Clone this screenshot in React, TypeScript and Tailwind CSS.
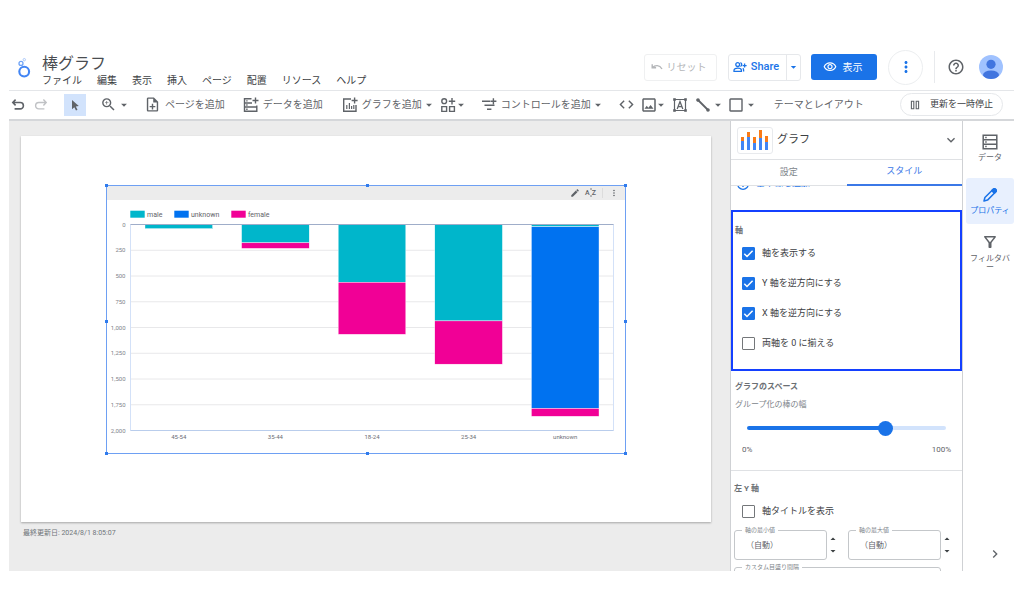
import { useState } from "react";
import type { ReactNode } from "react";
import {
  MdArrowDropDown,
  MdArrowDropUp,
  MdChevronRight,
  MdCode,
  MdEdit,
  MdHelpOutline,
  MdKeyboardArrowDown,
  MdMoreVert,
  MdOutlineFilterAlt,
  MdOutlineImage,
  MdOutlineNoteAdd,
  MdOutlineVisibility,
  MdZoomIn,
} from "react-icons/md";

const menus = ["ファイル", "編集", "表示", "挿入", "ページ", "配置", "リソース", "ヘルプ"];

type Series = "male" | "unknown" | "female";

const seriesColor: Record<Series, string> = {
  male: "#00b6cb",
  unknown: "#0072f0",
  female: "#f10096",
};

const legend: { name: Series; x: number }[] = [
  { name: "male", x: 24 },
  { name: "unknown", x: 68 },
  { name: "female", x: 125 },
];

const groups: { label: string; parts: [Series, number][] }[] = [
  { label: "45-54", parts: [["male", 40]] },
  { label: "35-44", parts: [["male", 178], ["female", 54]] },
  { label: "18-24", parts: [["male", 561], ["female", 505]] },
  { label: "25-34", parts: [["male", 936], ["female", 420]] },
  { label: "unknown", parts: [["male", 22], ["unknown", 1764], ["female", 76]] },
];

const AXIS = { left: 24.5, right: 507.5, top: 39.5, bottom: 245.5, max: 2000 };
const ticks = [0, 250, 500, 750, 1000, 1250, 1500, 1750, 2000];

function BarChart() {
  const unit = (AXIS.bottom - AXIS.top) / AXIS.max;
  const slot = (AXIS.right - AXIS.left) / groups.length;
  const barWidth = slot * 0.7;
  return (
    <svg viewBox="0 0 520 269" className="block w-full font-[Roboto]" role="img" aria-label="棒グラフ">
      {legend.map((l) => (
        <g key={l.name}>
          <rect x={l.x + 0.3} y="25.7" width="14.4" height="7" fill={seriesColor[l.name]} />
          <text x={l.x + 17} y="31.7" fontSize="7" fill="#5f6368">
            {l.name}
          </text>
        </g>
      ))}
      {ticks.map((t) => {
        const y = AXIS.top + t * unit;
        return (
          <g key={t}>
            <line x1={AXIS.left} x2={AXIS.right} y1={y} y2={y} stroke="#e8e8ea" strokeWidth="1" />
            <text x="19.5" y={y + 2.2} fontSize="6" textAnchor="end" fill="#80838a">
              {t.toLocaleString("en-US")}
            </text>
          </g>
        );
      })}
      <line x1={AXIS.left} x2={AXIS.left} y1={AXIS.top} y2={AXIS.bottom} stroke="#d3e1f8" />
      <line x1={AXIS.right} x2={AXIS.right} y1={AXIS.top} y2={AXIS.bottom} stroke="#d3e1f8" />
      <line x1={AXIS.left} x2={AXIS.right} y1={AXIS.bottom} y2={AXIS.bottom} stroke="#b9cdec" />
      {groups.map((g, i) => {
        const x = AXIS.left + slot * i + (slot - barWidth) / 2;
        let sum = 0;
        return (
          <g key={g.label}>
            {g.parts.map(([name, value]) => {
              const y = AXIS.top + sum * unit;
              sum += value;
              return (
                <rect
                  key={name}
                  x={x}
                  y={y}
                  width={barWidth}
                  height={value * unit}
                  fill={seriesColor[name]}
                  stroke="#ffffff"
                  strokeWidth="0.4"
                />
              );
            })}
            <text x={x + barWidth / 2} y="254" fontSize="6" textAnchor="middle" fill="#6b6e75">
              {g.label}
            </text>
          </g>
        );
      })}
      <line x1={AXIS.left} x2={AXIS.right} y1={AXIS.top} y2={AXIS.top} stroke="#9fadc9" />
    </svg>
  );
}

function Logo() {
  return (
    <svg viewBox="0 0 16 22" className="mb-[3px] h-[22px] w-4 shrink-0" fill="none" aria-hidden="true">
      <circle cx="8.2" cy="14.6" r="4.9" stroke="#4285f4" strokeWidth="2.1" />
      <circle cx="5" cy="6.4" r="2" stroke="#6ea3f7" strokeWidth="1.3" />
      <circle cx="8.3" cy="2.7" r="1.2" stroke="#a9c8fa" strokeWidth="1" />
    </svg>
  );
}

function Svg({ children }: { children: ReactNode }) {
  return (
    <svg viewBox="0 0 16 16" className="size-4 shrink-0" fill="none" stroke="currentColor" strokeWidth="1.4" aria-hidden="true">
      {children}
    </svg>
  );
}

const UndoIcon = () => (
  <Svg>
    <path d="M5.600 2.600 2.800 5.500l2.800 2.900M3 5.500h7.200a3.200 3.200 0 0 1 0 6.400H4.600" strokeWidth="1.600" />
  </Svg>
);
const RedoIcon = () => (
  <Svg>
    <path d="M10.400 2.600l2.800 2.900-2.800 2.900M13 5.500H5.800a3.200 3.200 0 0 0 0 6.400h5.600" strokeWidth="1.400" />
  </Svg>
);
const AddDataIcon = () => (
  <Svg>
    <path d="M8.5 1.7H1.5v12.6h12.3V8.5M1.5 6h7.5M1.5 10h12.3M12.5 0.5v6M9.5 3.5h6" />
    <path d="M3.2 3.9h1.4M3.2 8h1.4M3.2 12.2h1.4" />
  </Svg>
);
const AddChartIcon = () => (
  <Svg>
    <path d="M9 2H1.7v12.3H14V8M12.6 0.5v6M9.6 3.5h6" />
    <path d="M4.8 8v4M7.4 6v6M9.6 9v3M11.8 8v4" strokeWidth="1.2" />
  </Svg>
);
const CommunityIcon = () => (
  <Svg>
    <circle cx="4.2" cy="4.2" r="2.4" />
    <path d="M12 1v6.4M8.8 4.2h6.4M1.8 9.6h4.8v4.8H1.8zM9.6 9.6h4.8v4.8H9.6z" />
  </Svg>
);
const ControlIcon = () => (
  <Svg>
    <path d="M1 4.2h8M3.5 8.2h10M6 12.2h4.4M12.4 1.2v6M9.4 4.2h6" />
  </Svg>
);
const TextFrameIcon = () => (
  <Svg>
    <path d="M2.5 2.5h11v11h-11z" strokeWidth="1.2" />
    <path d="M1.5 1.5h2v2h-2zM12.5 1.5h2v2h-2zM1.5 12.5h2v2h-2zM12.5 12.5h2v2h-2z" fill="currentColor" strokeWidth="0.6" />
    <path d="M5.2 12 8 4.6 10.8 12M6.2 9.6h3.6" strokeWidth="1.3" />
  </Svg>
);
const LineIcon = () => (
  <Svg>
    <path d="M3 3l10 10" strokeWidth="1.8" />
    <circle cx="3" cy="3" r="1.1" fill="currentColor" />
    <circle cx="13" cy="13" r="1.1" fill="currentColor" />
  </Svg>
);
const RectIcon = () => (
  <Svg>
    <rect x="2" y="2" width="12" height="12" rx="0.6" />
  </Svg>
);
const CursorIcon = () => (
  <svg viewBox="0 0 16 16" className="size-4" fill="#5f6368" aria-hidden="true">
    <path d="M5 3v9.2l2.3-2 1.7 3.4 1.5-.8-1.7-3.3 3-.4z" />
  </svg>
);
const PauseIcon = () => (
  <svg viewBox="0 0 10 10" className="size-[10px]" fill="none" stroke="#5f6368" strokeWidth="1.1" aria-hidden="true">
    <path d="M1.4 1.3h2.4v7.4H1.4zM6.2 1.3h2.4v7.4H6.2z" />
  </svg>
);
const ShareIcon = () => (
  <svg viewBox="0 0 14 12" className="h-3 w-[14px]" fill="none" stroke="currentColor" strokeWidth="1.3" aria-hidden="true">
    <circle cx="4.7" cy="3.6" r="1.9" />
    <path d="M1 10.3V9.2c0-1.4 2-2 3.7-2s3.7.6 3.7 2v1.1zM7.4 1.7a2 2 0 0 1 0 3.8M10.6 10.4V9c0-.7-.3-1.3-.8-1.7M11.6 2.6v4M9.6 4.6h4" />
  </svg>
);
const ServerIcon = () => (
  <svg viewBox="0 0 16 16" className="size-4" fill="none" stroke="#5f6368" strokeWidth="1.5" aria-hidden="true">
    <path d="M1.2 1.2h13.6v13.6H1.2zM1.2 5.7h13.6M1.2 10.3h13.6" />
    <path d="M3.2 3.5h1.5M3.2 8h1.5M3.2 12.5h1.5" />
  </svg>
);
const PencilIcon = () => (
  <svg viewBox="0 0 16 16" className="size-4" fill="none" stroke="currentColor" strokeWidth="1.5" strokeLinejoin="round" aria-hidden="true">
    <path d="M2 14l.9-3.500 8.300-8.300a1.600 1.600 0 0 1 2.300 0l.3.3a1.600 1.600 0 0 1 0 2.300L5.500 13.100z" />
    <path d="M9.800 3.600l1.400-1.400a1.600 1.600 0 0 1 2.300 0l.3.3a1.600 1.600 0 0 1 0 2.300l-1.400 1.400z" fill="currentColor" />
  </svg>
);
const ResetIcon = () => (
  <svg viewBox="0 0 12 8" className="h-2 w-3" fill="none" stroke="currentColor" strokeWidth="1.4" aria-hidden="true">
    <path d="M1.2 1.2v3.6h3.9M1.5 4.6c2.600-2.800 7-2.900 9.500 1.400" />
  </svg>
);

function ChartThumb() {
  const bars = [
    [3, 8, 12],
    [9, 3, 8],
    [15, 8, 14],
    [21, 1, 9],
    [27, 7, 13],
  ];
  return (
    <svg viewBox="0 0 32 22" className="h-[22px] w-8" aria-hidden="true">
      {bars.map(([x, top, split]) => (
        <g key={x}>
          <rect x={x - 1} y={top} width="3" height={split - top} fill="#fa7b17" />
          <rect x={x - 1} y={split} width="3" height={21 - split} fill="#4285f4" />
        </g>
      ))}
    </svg>
  );
}

const Divider = () => <span className="h-[18px] w-px shrink-0 bg-[#e8eaed]" />;
const Caret = () => <MdArrowDropDown className="size-[14px] shrink-0 text-[#5f6368]" />;

function Tool({ label, children, className = "" }: { label?: string; children: ReactNode; className?: string }) {
  return (
    <button type="button" aria-label={label} className={`flex shrink-0 items-center whitespace-nowrap ${className}`}>
      {children}
    </button>
  );
}

function Header() {
  return (
    <header className="flex h-[43px] shrink-0 items-center border-b border-[#e4e6e9] pr-[11px] pl-[7px]">
      <Logo />
      <div className="ml-[10px] flex flex-col pt-[3px]">
        <h1 className="text-[16px] leading-[20px] text-[#4a4d51]">棒グラフ</h1>
        <nav className="flex gap-[15px] text-[10px] leading-[14px] text-[#3c4043]">
          {menus.map((m) => (
            <button key={m} type="button" className="whitespace-nowrap">
              {m}
            </button>
          ))}
        </nav>
      </div>
      <div className="ml-auto flex items-center pb-1">
        <button type="button" disabled className="flex h-[27px] w-[73px] items-center justify-center gap-1 rounded-[3px] border border-[#eff0f1] pr-1 text-[10px] text-[#b4b6b9]">
          <ResetIcon />
          リセット
        </button>
        <div className="ml-[11px] flex h-[27px] w-[73px] rounded-[3px] border border-[#e6e8eb] text-[#1a73e8]">
          <button type="button" className="flex flex-1 items-center justify-center gap-1 pr-[3px] font-[Roboto] text-[11px] font-medium">
            <ShareIcon />
            Share
          </button>
          <button type="button" aria-label="共有オプション" className="flex w-[14px] items-center justify-center border-l border-[#e6e8eb]">
            <MdArrowDropDown className="size-[14px]" />
          </button>
        </div>
        <button type="button" className="ml-[10px] flex h-[26px] w-[66px] items-center justify-center gap-[6px] rounded-[3px] bg-[#1a73e8] pr-[3px] text-[10px] text-white">
          <MdOutlineVisibility className="size-[14px]" />
          表示
        </button>
        <button type="button" aria-label="その他" className="ml-[11px] flex size-[35px] items-center justify-center rounded-full border border-[#eceef0] text-[#1a73e8]">
          <MdMoreVert className="size-[18px]" />
        </button>
        <span className="ml-[11px] h-8 w-px bg-[#e8eaed]" />
        <button type="button" aria-label="ヘルプ" className="ml-[12px] text-[#5f6368]">
          <MdHelpOutline className="size-[18px]" />
        </button>
        <button type="button" aria-label="アカウント" className="ml-[14px]">
          <svg viewBox="0 0 24 24" className="size-6">
            <clipPath id="avatar">
              <circle cx="12" cy="12" r="12" />
            </clipPath>
            <g clipPath="url(#avatar)">
              <rect width="24" height="24" fill="#a0c2ff" />
              <circle cx="12" cy="9.300" r="4.600" fill="#4175df" />
              <ellipse cx="12" cy="20" rx="8" ry="4.500" fill="#4175df" />
            </g>
          </svg>
        </button>
      </div>
    </header>
  );
}

function Toolbar() {
  return (
    <div className="flex h-[30px] shrink-0 items-center border-b-2 border-[#d5d7da] pr-[11px] pb-px pl-px text-[10px] text-[#5f6368]">
      <Tool label="元に戻す"><UndoIcon /></Tool>
      <Tool label="やり直し" className="ml-[7px] text-[#c0c2c5]"><RedoIcon /></Tool>
      <span className="ml-[9px]"><Divider /></span>
      <Tool label="選択" className="ml-[6px] h-[22px] w-[22px] justify-center bg-[#d2e3fc]"><CursorIcon /></Tool>
      <span className="ml-[5px]"><Divider /></span>
      <Tool label="ズーム" className="ml-[9px]"><MdZoomIn className="size-[17px]" /><Caret /></Tool>
      <span className="ml-[5px]"><Divider /></span>
      <Tool className="ml-2 gap-1"><MdOutlineNoteAdd className="size-[17px]" />ページを追加</Tool>
      <span className="ml-[10px]"><Divider /></span>
      <Tool className="ml-2 gap-1"><AddDataIcon />データを追加</Tool>
      <span className="ml-[10px]"><Divider /></span>
      <Tool className="ml-[9px] gap-1"><AddChartIcon />グラフを追加<span className="-ml-1"><Caret /></span></Tool>
      <Tool label="コミュニティ" className="ml-1"><CommunityIcon /><span className="-ml-[2px]"><Caret /></span></Tool>
      <span className="ml-[6px]"><Divider /></span>
      <Tool className="ml-[7px] gap-1"><ControlIcon />コントロールを追加<span className="-ml-1"><Caret /></span></Tool>
      <span className="ml-[5px]"><Divider /></span>
      <Tool label="URL の埋め込み" className="ml-[8px]"><MdCode className="size-[17px]" /></Tool>
      <Tool label="画像" className="ml-[5px]"><MdOutlineImage className="size-[18px]" /><span className="-ml-1"><Caret /></span></Tool>
      <Tool label="テキスト" className="ml-[4px]"><TextFrameIcon /></Tool>
      <Tool label="線" className="ml-[7px]"><LineIcon /><Caret /></Tool>
      <Tool label="図形" className="ml-[3px]"><RectIcon /><Caret /></Tool>
      <span className="ml-[7px]"><Divider /></span>
      <Tool className="ml-[9px]">テーマとレイアウト</Tool>
      <button type="button" className="ml-auto flex h-[23px] w-[103px] items-center justify-center gap-[10px] rounded-full border border-[#e6e8eb] text-[9px] text-[#3c4043]">
        <PauseIcon />
        更新を一時停止
      </button>
    </div>
  );
}

const handles = [
  "-top-px -left-px",
  "-top-px left-1/2",
  "-top-px -right-px",
  "top-1/2 -left-px",
  "top-1/2 -right-px",
  "-bottom-px -left-px",
  "-bottom-px left-1/2",
  "-bottom-px -right-px",
];

function Canvas() {
  return (
    <main className="min-w-0 flex-1 bg-[#ececec] pt-[15px] pr-[19px] pl-3">
      <div className="relative aspect-[690/386] bg-white shadow-[0_1px_2px_rgba(0,0,0,0.3)]">
        <div className="absolute top-[49px] left-[85px] w-[520px]">
          <div className="absolute inset-x-0 top-0 flex h-[15px] items-center justify-end bg-[#ececec] pr-[7px] text-[#5f6368]">
            <button type="button" aria-label="編集"><MdEdit className="size-[10px]" /></button>
            <button type="button" aria-label="並べ替え" className="ml-[5px] flex items-center font-[Roboto] text-[7px] leading-[8px] font-medium">
              <span>A</span>
              <svg viewBox="0 0 2 9" className="h-[9px] w-[2px]" stroke="currentColor" strokeWidth="0.8" aria-hidden="true">
                <path d="M1 0v2M1 7v2" />
              </svg>
              <span>Z</span>
            </button>
            <span className="ml-[6px] h-[10px] w-px bg-[#dcdcdc]" />
            <button type="button" aria-label="その他" className="ml-[6px]"><MdMoreVert className="size-[10px]" /></button>
          </div>
          <BarChart />
          <div className="pointer-events-none absolute inset-0 border border-[#6ea0f3]" />
          {handles.map((h) => (
            <span key={h} className={`absolute size-[3px] bg-[#2f7bed] ${h}`} />
          ))}
        </div>
      </div>
      <p className="mt-[5px] ml-[2px] text-[7px] leading-3 text-[#70757a]">最終更新日: 2024/8/1 8:05:07</p>
    </main>
  );
}

function CheckRow({ label, initial = false }: { label: string; initial?: boolean }) {
  const [on, setOn] = useState(initial);
  return (
    <label className="flex items-center gap-[7px] text-[9px] leading-[13px] text-[#3c4043]">
      <span className="grid">
        <input
          type="checkbox"
          checked={on}
          onChange={(e) => setOn(e.target.checked)}
          className="col-start-1 row-start-1 size-[13px] appearance-none rounded-[1px] border border-[#74777a] bg-white checked:border-[#1a73e8] checked:bg-[#1a73e8]"
        />
        {on && (
          <svg viewBox="0 0 13 13" className="pointer-events-none col-start-1 row-start-1 size-[13px]" fill="none" stroke="#fff" strokeWidth="1.5" aria-hidden="true">
            <path d="M2.300 6.800l2.700 2.700 5.600-5.700" />
          </svg>
        )}
      </span>
      {label}
    </label>
  );
}

function Field({ id, label }: { id: string; label: string }) {
  return (
    <div className="relative min-w-0 flex-1">
      <label htmlFor={id} className="absolute -top-[5px] left-[8px] bg-white px-[3px] text-[6px] leading-[10px] whitespace-nowrap text-[#80868b]">
        {label}
      </label>
      <input
        id={id}
        type="text"
        defaultValue="（自動）"
        className="block h-[30px] w-full rounded-[3px] border border-[#c4c7ca] bg-white pb-px pl-[11px] text-[8px] text-[#5f6368]"
      />
    </div>
  );
}

function Stepper({ label }: { label: string }) {
  return (
    <div className="flex w-[21px] flex-col items-center justify-center pr-[9px] text-[#3c4043]">
      <button type="button" aria-label={`${label}を増やす`}><MdArrowDropUp className="size-[12px]" /></button>
      <button type="button" aria-label={`${label}を減らす`}><MdArrowDropDown className="size-[12px]" /></button>
    </div>
  );
}

function StylePanel() {
  const [width, setWidth] = useState(71);
  return (
    <aside className="flex w-[233px] shrink-0 flex-col border-x border-[#cfd1d4] bg-white">
      <div className="flex h-[39px] shrink-0 items-center border-b border-[#dfe1e4] pr-[3px] pl-[6px]">
        <div className="flex h-[27px] w-9 items-center justify-center rounded-[3px] border border-[#e8eaed]">
          <ChartThumb />
        </div>
        <h2 className="ml-1 text-[11px] text-[#3c4043]">グラフ</h2>
        <button type="button" aria-label="グラフの種類" className="ml-auto">
          <MdKeyboardArrowDown className="size-4 text-[#5f6368]" />
        </button>
      </div>
      <div className="grid h-[26px] shrink-0 grid-cols-2 text-[9px]">
        <button type="button" className="border-b border-[#dfe1e4] text-[#80868b]">設定</button>
        <button type="button" className="border-b-2 border-[#3b78e7] text-[#3b78e7]">スタイル</button>
      </div>
      <div className="-mx-px min-h-0 flex-1 overflow-hidden border-x border-[#cfd1d4]">
        <button type="button" className="-mt-2 flex h-3 items-center gap-[7px] pl-[6px] text-[9px] leading-3 text-[#1a73e8]">
          <svg viewBox="0 0 12 12" className="size-3" fill="none" stroke="currentColor" strokeWidth="1.300" aria-hidden="true">
            <circle cx="6" cy="6" r="5.300" />
            <path d="M6 3v6M3 6h6" />
          </svg>
          <span className="pb-[2px]">基準線を追加</span>
        </button>
        <section className="mt-5 h-[161px] border-2 border-[#1440ff] pt-[13px] pl-[2px]">
          <h3 className="text-[8px] leading-3 font-bold text-[#6b6f74]">軸</h3>
          <div className="mt-[10px] flex flex-col gap-[17px] pl-[7px]">
            <CheckRow label="軸を表示する" initial />
            <CheckRow label="Y 軸を逆方向にする" initial />
            <CheckRow label="X 軸を逆方向にする" initial />
            <CheckRow label="両軸を 0 に揃える" />
          </div>
        </section>
        <section className="border-b border-[#dfe1e4] px-1 pt-[10px] pb-[14px]">
          <h3 className="text-[8px] leading-3 font-bold text-[#6b6f74]">グラフのスペース</h3>
          <label htmlFor="bar-width" className="mt-[6px] block text-[8px] leading-3 text-[#80868b]">グループ化の棒の幅</label>
          <div className="px-3 pt-[15px]">
            <input
              id="bar-width"
              type="range"
              min={0}
              max={100}
              value={width}
              onChange={(e) => setWidth(Number(e.target.value))}
              style={{ background: `linear-gradient(to right, #1a73e8 ${width}%, #d2e3fc ${width}%)` }}
              className="block h-1 w-full appearance-none rounded-full [&::-webkit-slider-thumb]:size-[15px] [&::-webkit-slider-thumb]:appearance-none [&::-webkit-slider-thumb]:rounded-full [&::-webkit-slider-thumb]:bg-[#1a73e8]"
            />
          </div>
          <div className="mt-[14px] flex justify-between px-[7px] text-[8px] leading-3 text-[#5f6368]">
            <span>0%</span>
            <span>100%</span>
          </div>
        </section>
        <section className="pt-3 pl-[3px]">
          <h3 className="text-[8px] leading-3 font-bold text-[#6b6f74]">左 Y 軸</h3>
          <div className="mt-[10px] pl-2">
            <CheckRow label="軸タイトルを表示" />
          </div>
          <div className="mt-3 flex">
            <Field id="axis-min" label="軸の最小値" />
            <Stepper label="軸の最小値" />
            <Field id="axis-max" label="軸の最大値" />
            <Stepper label="軸の最大値" />
          </div>
          <div className="mt-[7px] pr-[21px]">
            <Field id="tick-gap" label="カスタム目盛り間隔" />
          </div>
        </section>
      </div>
    </aside>
  );
}

function Rail() {
  return (
    <nav className="flex w-[51px] shrink-0 flex-col bg-white pt-[13px] pl-[3px] text-[8px] leading-[9px] text-[#5f6368]">
      <button type="button" className="flex flex-col items-center gap-[3px]">
        <ServerIcon />
        データ
      </button>
      <button type="button" className="mt-4 flex h-[46px] flex-col items-center justify-center gap-[3px] rounded-[3px] bg-[#e8f0fe] pb-px text-[#1a73e8]">
        <PencilIcon />
        プロパティ
      </button>
      <button type="button" className="mt-[9px] flex flex-col items-center gap-[3px]">
        <MdOutlineFilterAlt className="size-[18px]" />
        <span className="w-10 break-all">フィルタバー</span>
      </button>
      <button type="button" aria-label="パネルを閉じる" className="mt-auto mr-[11px] mb-[9px] self-end">
        <MdChevronRight className="size-4" />
      </button>
    </nav>
  );
}

export default function App() {
  return (
    <div className="flex h-screen flex-col bg-white pt-12 pr-[10px] pb-[43px] pl-[9px] font-[Roboto,'Noto_Sans_CJK_JP',sans-serif]">
      <Header />
      <Toolbar />
      <div className="flex min-h-0 flex-1 overflow-hidden">
        <Canvas />
        <StylePanel />
        <Rail />
      </div>
    </div>
  );
}
